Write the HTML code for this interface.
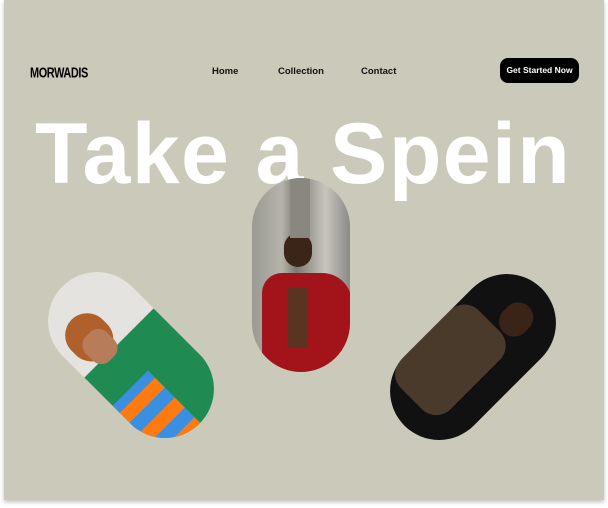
<!DOCTYPE html>
<html><head><style>
html,body{margin:0;padding:0;background:#fff;}
body{width:608px;height:508px;position:relative;overflow:hidden;font-family:"Liberation Sans",Arial,sans-serif;}
.card{position:absolute;left:4px;top:0;width:600px;height:500px;background:#cbc9ba;box-shadow:0 2px 4px rgba(0,0,0,.25);}
.logo{position:absolute;left:30px;top:64px;font-weight:bold;font-size:14px;letter-spacing:-.5px;color:#000;transform:scale(0.78,1.05);transform-origin:left top;}
.nav{position:absolute;top:66px;font-size:9.5px;font-weight:bold;color:#111;}
.btn{position:absolute;left:500px;top:58px;width:79px;height:25px;border-radius:8px;background:#000;color:#fff;font-size:8.5px;font-weight:bold;text-align:center;line-height:24px;}
.title{position:absolute;left:35px;top:104px;font-size:86px;font-weight:bold;color:#fff;letter-spacing:1.4px;white-space:nowrap;line-height:100px;}
.pill{position:absolute;width:98px;height:194px;border-radius:49px;overflow:hidden;}
</style></head><body>
<div class="card"></div>
<div class="logo">MORWADIS</div>
<div class="nav" style="left:212px">Home</div>
<div class="nav" style="left:278px">Collection</div>
<div class="nav" style="left:361px">Contact</div>
<div class="btn">Get Started Now</div>
<div class="title">Take a Spein</div>
<div class="pill" style="left:252px;top:178px;background:linear-gradient(90deg,#9a9a92 0%,#b5b3aa 30%,#7d7a72 45%,#c7c5bd 75%,#8a8a85 100%);">
  <div style="position:absolute;left:10px;top:95px;width:90px;height:110px;background:#a3141a;border-radius:20px 30px 0 0;"></div>
  <div style="position:absolute;left:36px;top:110px;width:20px;height:60px;background:#5a3420;"></div>
  <div style="position:absolute;left:32px;top:55px;width:28px;height:34px;background:#3b2418;border-radius:14px;"></div>
  <div style="position:absolute;left:38px;top:0;width:20px;height:60px;background:#8a8780;"></div>
</div>
<div class="pill" style="left:82px;top:258px;transform:rotate(-45deg);background:#e4e3df;">
  <div style="position:absolute;left:0;top:80px;width:98px;height:120px;background:#1f8a52;"></div>
  <div style="position:absolute;left:0;top:120px;width:50px;height:80px;background:repeating-linear-gradient(0deg,#ff7a10 0 14px,#3a8fe0 14px 28px);"></div>
  <div style="position:absolute;left:10px;top:30px;width:44px;height:50px;background:#b0602a;border-radius:22px;"></div>
  <div style="position:absolute;left:18px;top:52px;width:30px;height:34px;background:#b77c5a;border-radius:12px;"></div>
</div>
<div class="pill" style="left:424px;top:260px;transform:rotate(45deg);background:#111;">
  <div style="position:absolute;left:0;top:60px;width:70px;height:110px;background:#4a3a2c;border-radius:20px;"></div>
  <div style="position:absolute;left:38px;top:22px;width:30px;height:36px;background:#3a2418;border-radius:15px;"></div>
</div>
</body></html>
